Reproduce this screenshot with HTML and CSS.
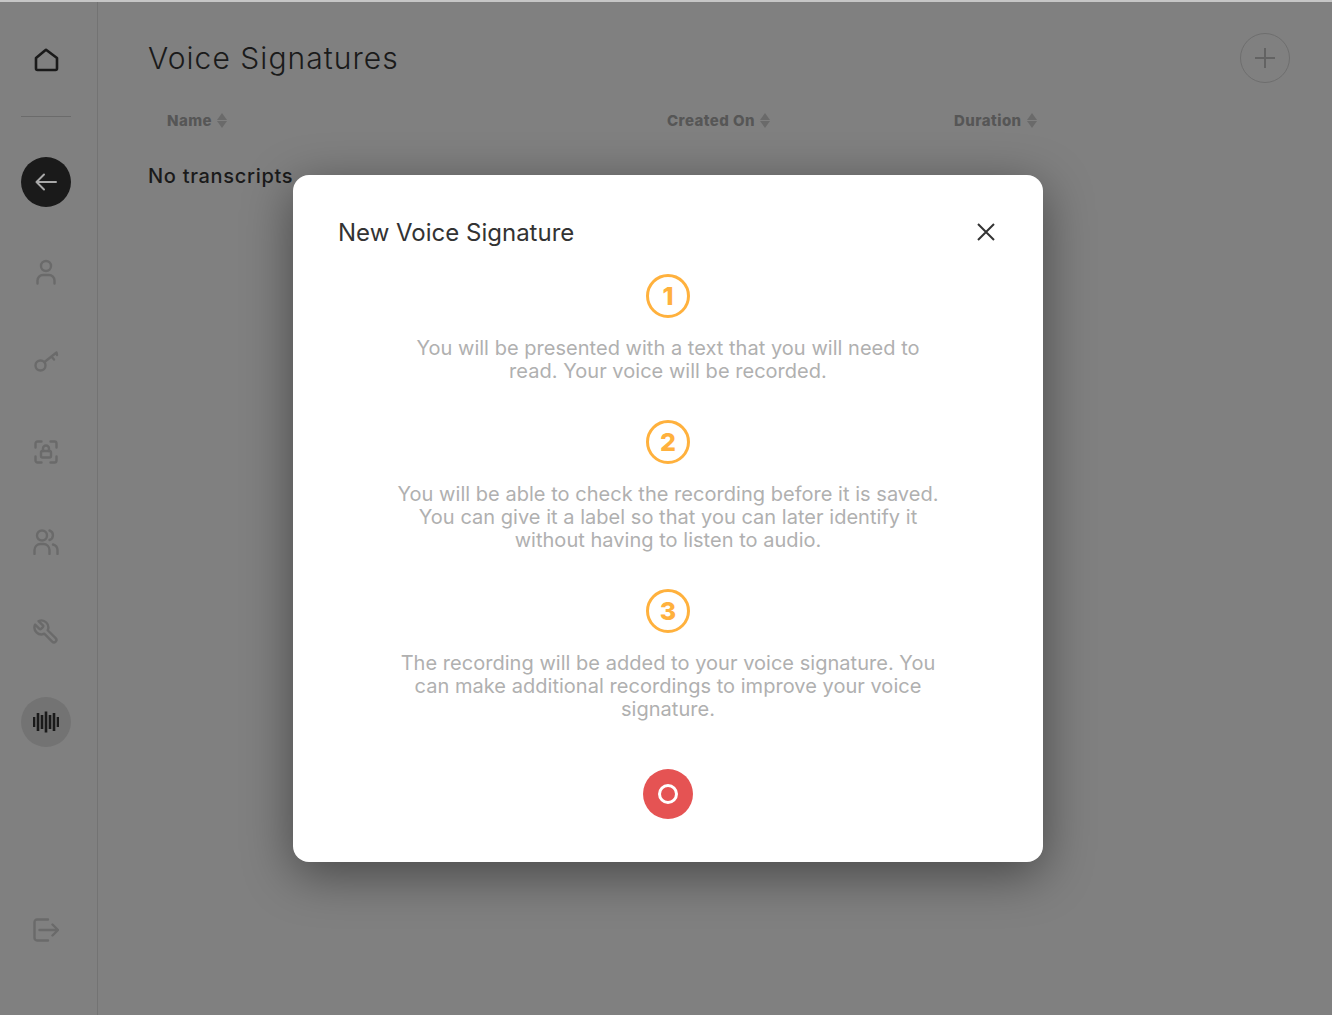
FILE: index.html
```html
<!DOCTYPE html>
<html>

<head>
	<meta charset="utf-8">
	<title>Voice Signatures</title>
	<link rel="stylesheet" href="styles.css">
</head>

<body>
	<div class="topline"></div>
	<div class="app">
		<!-- sidebar -->
		<nav class="sidebar">
			<a class="nav-home">
				<svg class="icon dark" viewBox="0 0 26 26"><path d="M3 11 12.300 3.200a1 1 0 0 1 1.400 0L24 11v10.500a1.500 1.500 0 0 1-1.500 1.500h-18A1.500 1.500 0 0 1 3 21.500Z" /></svg>
			</a>
			<div class="nav-sep"></div>
			<a class="nav-item back">
				<svg class="icon" viewBox="0 0 26 26"><path d="M23 13H3.500M11 5.500 3.500 13l7.500 7.500" /></svg>
			</a>
			<a class="nav-item">
				<svg class="icon" viewBox="0 0 26 26"><circle cx="13" cy="7" r="5" /><path d="M4.500 24.500v-3a5.500 5.500 0 0 1 5.500-5.500h6a5.500 5.500 0 0 1 5.500 5.500v3" /></svg>
			</a>
			<a class="nav-item">
				<svg class="icon" viewBox="0 0 26 26"><circle cx="7.500" cy="16.500" r="5" /><path d="M11.500 13 23.500 3.500M18.500 7.500l2.500 3M23.500 3.500l.5 2.500" /></svg>
			</a>
			<a class="nav-item">
				<svg class="icon" viewBox="0 0 26 26"><path d="M2.500 8.500v-4a2 2 0 0 1 2-2h4M17.500 2.500h4a2 2 0 0 1 2 2v4M23.500 17.500v4a2 2 0 0 1-2 2h-4M8.500 23.500h-4a2 2 0 0 1-2-2v-4" /><rect x="8" y="12" width="10" height="6.500" rx="1.500" /><path d="M10 12V9.500a3 3 0 0 1 6 0V12" /></svg>
			</a>
			<a class="nav-item">
				<svg class="icon" viewBox="0 0 26 26"><circle cx="9" cy="6.500" r="5" /><path d="M1.500 25v-4a6 6 0 0 1 6-6h3a6 6 0 0 1 6 6v4M16.500 1.500a5 5 0 0 1 0 9.500M20 15.500a6 6 0 0 1 4.500 5.500v4" /></svg>
			</a>
			<a class="nav-item">
				<svg class="icon wrench" viewBox="0 0 26 26"><path d="M14.700 6.300a1 1 0 0 0 0 1.400l1.600 1.600a1 1 0 0 0 1.400 0l3.770-3.770a6 6 0 0 1-7.940 7.940l-6.910 6.910a2.120 2.120 0 0 1-3-3l6.910-6.910a6 6 0 0 1 7.940-7.940l-3.760 3.760z" transform="translate(26.800 -.8) scale(-1.150 1.150)" /></svg>
			</a>
			<a class="nav-item active">
				<svg class="icon bars" viewBox="0 0 26 26"><path d="M1 8v10M5 4v18M9 6v14M13 2.500v21M17 6v14M21 4v18M25 8v10" /></svg>
			</a>
			<a class="nav-item logout">
				<svg class="icon" viewBox="0 0 26 26"><path d="M15 2.500H4A2.500 2.500 0 0 0 1.500 5v16A2.500 2.500 0 0 0 4 23.500h11M6.500 13H25M19.500 7.500 25 13l-5.500 5.500" /></svg>
			</a>
		</nav>

		<!-- list -->
		<main class="content">
			<header class="head">
				<h1>Voice Signatures</h1>
				<button class="add">
					<svg viewBox="0 0 20 20"><path d="M10 0v20M0 10h20" /></svg>
				</button>
			</header>
			<div class="cols">
				<div class="col">Name <span class="sort"></span></div>
				<div class="col">Created On <span class="sort"></span></div>
				<div class="col">Duration <span class="sort"></span></div>
			</div>
			<p class="empty">No transcripts</p>
		</main>
	</div>

	<!-- dialog -->
	<div class="modal">
		<div class="modal-head">
			<h2>New Voice Signature</h2>
			<svg class="close" viewBox="0 0 18 18"><path d="M1 1l16 16M17 1 1 17" /></svg>
		</div>
		<div class="step">
			<div class="num">1</div>
			<p>You will be presented with a text that you will need to<br>read. Your voice will be recorded.</p>
		</div>
		<div class="step">
			<div class="num">2</div>
			<p>You will be able to check the recording before it is saved.<br>You can give it a label so that you can later identify it<br>without having to listen to audio.</p>
		</div>
		<div class="step">
			<div class="num">3</div>
			<p>The recording will be added to your voice signature. You<br>can make additional recordings to improve your voice<br>signature.</p>
		</div>
		<button class="record"><span></span></button>
	</div>
</body>

</html>
```

FILE: styles.css
```css
* {
	box-sizing: border-box;
}

html,
body {
	height: 100%;
}

body {
	margin: 0;
	display: flex;
	flex-direction: column;
	background-color: #808080;
	font-family: "Inter", "Liberation Sans", sans-serif;
	overflow: hidden;
}

.topline {
	height: 2px;
	background-color: #c6c6c6;
}

.app {
	flex: 1;
	display: flex;
}

.sidebar {
	width: 98px;
	display: flex;
	flex-direction: column;
	align-items: center;
	padding: 33px 5px 60px 0;
	border-right: 1px solid #737373;
}

.icon {
	width: 26px;
	height: 26px;
	fill: none;
	stroke: #6a6a6a;
	stroke-width: 2.4;
	stroke-linecap: round;
	stroke-linejoin: round;
}

.icon.dark {
	stroke: #1a1a1a;
	stroke-width: 2.6;
}

.icon.wrench {
	stroke-width: 2.1;
}

.nav-home {
	height: 50px;
	display: flex;
	align-items: center;
	justify-content: center;
}

.nav-sep {
	width: 50px;
	height: 1px;
	margin: 31px 0 40px;
	background-color: #6b6b6b;
}

.nav-item {
	width: 50px;
	height: 50px;
	margin-bottom: 40px;
	border-radius: 50%;
	display: flex;
	align-items: center;
	justify-content: center;
}

.nav-item.back {
	background-color: #1a1a1a;
}

.back .icon {
	stroke: #a8a8a8;
	stroke-width: 2;
}

.nav-item.active {
	background-color: #737373;
}

.bars {
	stroke: #1a1a1a;
	stroke-width: 2.6;
	stroke-linecap: butt;
}

.nav-item.logout {
	margin-top: auto;
	margin-bottom: 0;
}

.content {
	flex: 1;
	padding: 31px 42px 0 50px;
}

.head {
	display: flex;
	justify-content: space-between;
	align-items: center;
}

h1 {
	margin: 0;
	font-size: 30px;
	font-weight: 300;
	letter-spacing: 1.05px;
	color: #1a1a1a;
}

.add {
	width: 50px;
	height: 50px;
	padding: 0;
	background: none;
	border: 1px solid #6e6e6e;
	border-radius: 50%;
	display: flex;
	align-items: center;
	justify-content: center;
}

.add svg {
	width: 20px;
	height: 20px;
	fill: none;
	stroke: #636363;
	stroke-width: 2;
}

.cols {
	display: grid;
	grid-template-columns: 500px 287px auto;
	padding-left: 19px;
	margin-top: 14px;
}

.col {
	display: flex;
	align-items: center;
	gap: 5px;
	height: 46px;
	font-size: 15px;
	font-weight: 800;
	letter-spacing: 0.45px;
	color: #565656;
}

.sort {
	display: inline-block;
	position: relative;
	width: 10px;
	height: 15px;
}

.sort:before,
.sort:after {
	content: '';
	position: absolute;
	left: 0;
	border-left: 5px solid transparent;
	border-right: 5px solid transparent;
}

.sort:before {
	top: 0;
	border-bottom: 7px solid #6a6a6a;
}

.sort:after {
	bottom: 0;
	border-top: 7px solid #6a6a6a;
}

.empty {
	margin: 21px 0 0;
	font-size: 20px;
	font-weight: 500;
	letter-spacing: 0.7px;
	color: #1a1a1a;
}

.modal {
	position: absolute;
	left: 293px;
	top: 175px;
	width: 750px;
	height: 687px;
	padding: 40px 45px 0;
	background-color: #ffffff;
	border-radius: 16px;
	box-shadow: 0 12px 50px rgba(0, 0, 0, 0.45);
	display: flex;
	flex-direction: column;
	align-items: center;
}

.modal-head {
	width: 100%;
	height: 34px;
	display: flex;
	justify-content: space-between;
	align-items: center;
}

h2 {
	margin: 0;
	font-size: 24px;
	font-weight: 400;
	color: #333333;
}

.close {
	width: 18px;
	height: 18px;
	margin-right: 3px;
	margin-bottom: 1px;
	fill: none;
	stroke: #333333;
	stroke-width: 2;
}

.step {
	display: flex;
	flex-direction: column;
	align-items: center;
	margin-top: 37px;
}

.modal-head + .step {
	margin-top: 25px;
}

.num {
	width: 44px;
	height: 44px;
	border: 3px solid #ffb13d;
	border-radius: 50%;
	display: flex;
	align-items: center;
	justify-content: center;
	font-size: 25px;
	font-weight: 800;
	color: #ffb13d;
}

.step p {
	margin: 19px 0 0;
	text-align: center;
	font-size: 20px;
	line-height: 23px;
	letter-spacing: 0.03px;
	color: #b0b0b0;
}

.record {
	width: 50px;
	height: 50px;
	margin-top: 48px;
	padding: 0;
	border: none;
	border-radius: 50%;
	background-color: #e55353;
	display: flex;
	align-items: center;
	justify-content: center;
}

.record span {
	width: 20px;
	height: 20px;
	border: 3px solid #ffffff;
	border-radius: 50%;
}
```
